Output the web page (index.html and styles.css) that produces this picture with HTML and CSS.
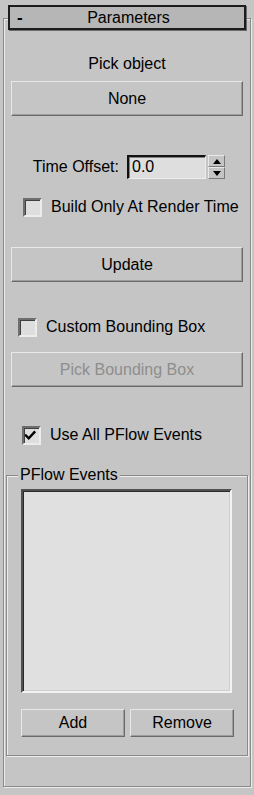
FILE: index.html
```html
<!DOCTYPE html>
<html>
<head>
<meta charset="utf-8">
<link rel="stylesheet" href="styles.css">
</head>
<body>
<div class="rollout">
  <div class="header">
    <span class="collapse">-</span>
    <span class="title">Parameters</span>
    <span></span>
  </div>
  <div class="frame">
    <div class="label-center">Pick object</div>
    <div class="btn wide">None</div>

    <div class="spin-row">
      <span class="spin-label">Time Offset:</span>
      <div class="field">0.0</div>
      <div class="spinner">
        <div class="spin-half"><span class="tri-up"></span></div>
        <div class="spin-half"><span class="tri-down"></span></div>
      </div>
    </div>

    <div class="check-row build"><span class="box"></span><span>Build Only At Render Time</span></div>

    <div class="btn wide update">Update</div>

    <div class="check-row custom"><span class="box"></span><span>Custom Bounding Box</span></div>

    <div class="btn wide pickbb disabled">Pick Bounding Box</div>

    <div class="check-row useall"><span class="box"><svg width="15" height="15" viewBox="0 0 15 15"><polyline points="1,6.5 4,9.5 10,3" fill="none" stroke="#000" stroke-width="2.6" stroke-linecap="square"/></svg></span><span>Use All PFlow Events</span></div>

    <fieldset class="group">
      <legend>PFlow Events</legend>
      <div class="listbox"></div>
      <div class="btn-row">
        <div class="btn small">Add</div>
        <div class="btn small">Remove</div>
      </div>
    </fieldset>
  </div>
</div>
</body>
</html>
```
FILE: styles.css
```css
html, body {
  margin: 0;
  padding: 0;
  background: #c5c5c5;
}
body {
  font-family: "Liberation Sans", Arial, sans-serif;
  font-size: 16px;
  color: #000;
  width: 254px;
  height: 795px;
  overflow: hidden;
}
.rollout {
  padding-top: 5px;
}
.header {
  position: relative;
  z-index: 1;
  margin-left: 8px;
  width: 238px;
  height: 25px;
  box-sizing: border-box;
  border: 2px solid #1c1c1c;
  box-shadow: 1px 1px 0 #6a6a6a;
  background: #b6b6b6;
  display: grid;
  grid-template-columns: 1fr auto 1fr;
  align-items: center;
  line-height: 20px;
}
.collapse {
  padding-left: 7px;
  font-weight: bold;
  font-size: 17px;
  line-height: 18px;
}
.title {
  padding-left: 3px;
}
.frame {
  margin-top: -12px;
  margin-left: 3px;
  width: 248px;
  box-sizing: border-box;
  border: 1px solid #8a8a8a;
  box-shadow: inset 1px 1px 0 #ececec, 1px 1px 0 #ececec;
  padding-top: 35px;
  padding-bottom: 30px;
}
.label-center {
  text-align: center;
  line-height: 20px;
  height: 20px;
}
.btn {
  box-sizing: border-box;
  display: flex;
  align-items: center;
  justify-content: center;
  background: #c5c5c5;
  border-top: 1px solid #e8e8e8;
  border-left: 1px solid #e8e8e8;
  border-right: 1px solid #6a6a6a;
  border-bottom: 1px solid #6a6a6a;
  box-shadow: inset -1px -1px 0 #9c9c9c;
  line-height: 20px;
}
.wide {
  margin-left: 7px;
  width: 232px;
  height: 35px;
}
.label-center + .wide {
  margin-top: 7px;
}
.disabled {
  color: #8e8e8e;
}
.spin-row {
  margin-top: 39px;
  height: 24px;
  display: flex;
  justify-content: flex-end;
  align-items: center;
  padding-right: 25px;
}
.spin-label {
  margin-right: 8px;
  line-height: 20px;
}
.field {
  box-sizing: border-box;
  width: 79px;
  height: 24px;
  background: #dedede;
  border-top: 2px solid #111;
  border-left: 2px solid #111;
  border-right: 1px solid #ececec;
  border-bottom: 1px solid #ececec;
  box-shadow: inset 1px 1px 0 #808080;
  padding-left: 3px;
  line-height: 20px;
}
.spinner {
  margin-left: 2px;
  width: 17px;
  height: 24px;
  display: flex;
  flex-direction: column;
}
.spin-half {
  flex: 1;
  box-sizing: border-box;
  border-top: 1px solid #e8e8e8;
  border-left: 1px solid #e8e8e8;
  border-right: 1px solid #7a7a7a;
  border-bottom: 1px solid #7a7a7a;
  display: flex;
  align-items: center;
  justify-content: center;
}
.tri-up {
  width: 0;
  height: 0;
  border-left: 4px solid transparent;
  border-right: 4px solid transparent;
  border-bottom: 5px solid #000;
}
.tri-down {
  width: 0;
  height: 0;
  border-left: 4px solid transparent;
  border-right: 4px solid transparent;
  border-top: 5px solid #000;
}
.check-row {
  display: flex;
  align-items: center;
  height: 20px;
  line-height: 20px;
}
.box {
  box-sizing: border-box;
  width: 19px;
  height: 19px;
  flex: none;
  background: #dedede;
  border-top: 2px solid #6e6e6e;
  border-left: 2px solid #6e6e6e;
  border-right: 2px solid #ececec;
  border-bottom: 2px solid #ececec;
  box-shadow: inset 1px 1px 0 #404040;
  display: flex;
  align-items: flex-start;
  justify-content: flex-start;
}
.box svg {
  display: block;
  margin: 1px 0 0 1px;
}
.build {
  margin-top: 18px;
  padding-left: 19px;
}
.build .box { margin-right: 9px; }
.update {
  margin-top: 30px;
}
.custom {
  margin-top: 35px;
  padding-left: 14px;
}
.custom .box { margin-right: 9px; }
.pickbb {
  margin-top: 15px;
}
.useall {
  margin-top: 38px;
  padding-left: 18px;
}
.useall .box { margin-right: 9px; }
.group {
  margin: 20px 2px 0 2px;
  width: 242px;
  box-sizing: border-box;
  padding: 0 0 18px 0;
  border: 1px solid #8a8a8a;
  box-shadow: inset 1px 1px 0 #ececec, 1px 1px 0 #ececec;
  min-width: 0;
}
.group legend {
  margin-left: 11px;
  padding: 0 2px;
  line-height: 20px;
  background: #c5c5c5;
}
.listbox {
  margin: 4px 0 0 14px;
  width: 211px;
  height: 204px;
  box-sizing: border-box;
  background: #e0e0e0;
  border-top: 2px solid #505050;
  border-left: 2px solid #505050;
  border-right: 2px solid #f2f2f2;
  border-bottom: 2px solid #f2f2f2;
  box-shadow: inset 1px 1px 0 #2a2a2a, inset -1px -1px 0 #d0d0d0;
}
.btn-row {
  margin: 16px 0 0 14px;
  display: flex;
  gap: 5px;
}
.small {
  width: 104px;
  height: 28px;
}
```
